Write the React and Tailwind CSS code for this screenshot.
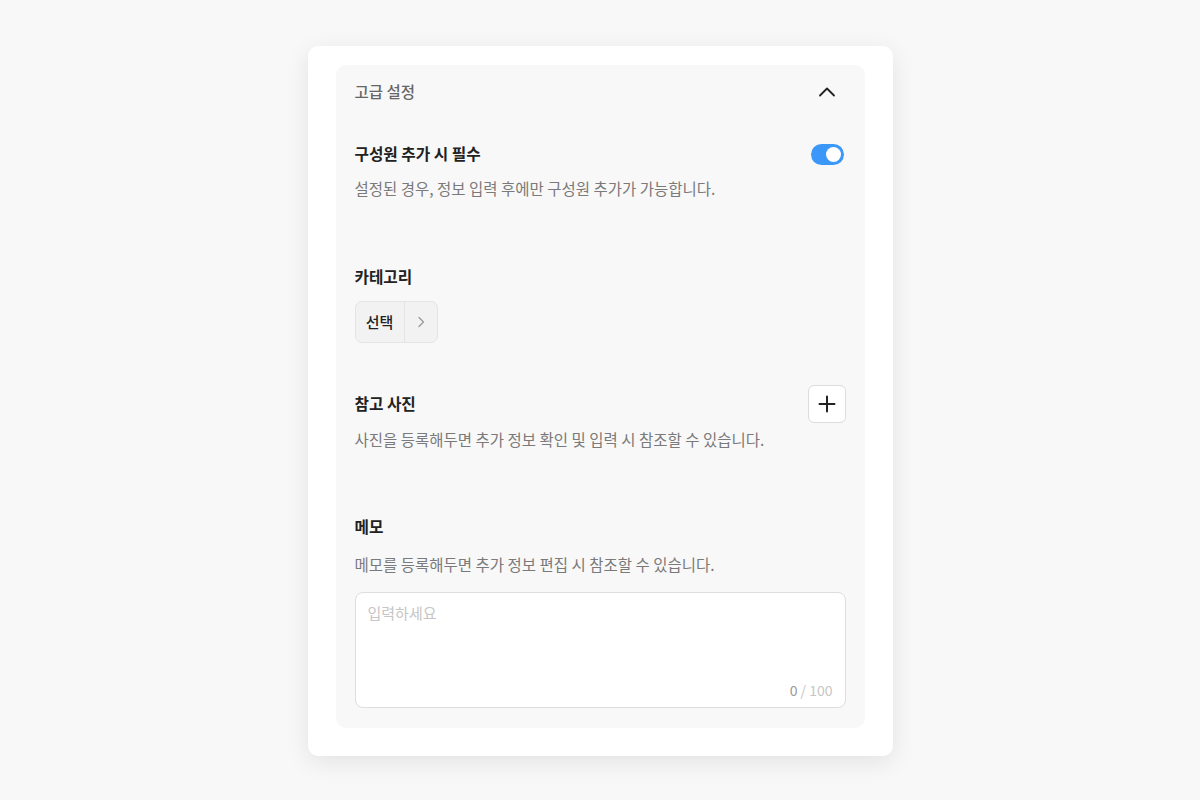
import React, { useState } from "react";

const FONT = { fontFamily: '"Noto Sans CJK KR", "Noto Sans", sans-serif' };

const ChevronUp = () => (
  <svg width="18" height="18" viewBox="0 0 18 18" fill="none">
    <path d="M2 12.5L9 5.5L16 12.5" stroke="#222" strokeWidth="1.8" strokeLinecap="round" strokeLinejoin="round" />
  </svg>
);

const ChevronRight = () => (
  <svg width="12" height="12" viewBox="0 0 12 12" fill="none">
    <path d="M4 1.5L8.5 6L4 10.5" stroke="#9a9a9a" strokeWidth="1.3" strokeLinecap="round" strokeLinejoin="round" />
  </svg>
);

const Plus = () => (
  <svg width="18" height="18" viewBox="0 0 18 18" fill="none">
    <path d="M9 1.5V16.5M1.5 9H16.5" stroke="#222" strokeWidth="2" strokeLinecap="round" />
  </svg>
);

const App = () => {
  const [required, setRequired] = useState(true);
  const [memo, setMemo] = useState("");

  return (
    <div className="min-h-screen bg-[#f8f8f8] flex items-center justify-center pt-[2px]" style={FONT}>
      <div className="w-[585px] bg-white rounded-[10px] shadow-[0_6px_24px_rgba(0,0,0,0.09)] pt-[19px] px-[28px] pb-[28px]">
        <div className="bg-[#f8f8f8] rounded-[10px] px-[19px] pb-5">
          {/* Header */}
          <div className="h-[54px] flex items-center justify-between">
            <span className="text-[15.5px] text-[#666] font-medium">고급 설정</span>
            <button className="mr-[10px]">
              <ChevronUp />
            </button>
          </div>

          {/* Required on add */}
          <div className="mt-6 h-[22px] flex items-center justify-between">
            <span className="text-[15.7px] font-bold text-[#222] leading-[22px]">구성원 추가 시 필수</span>
            <button
              onClick={() => setRequired(!required)}
              className={`mr-[2px] w-[33px] h-[21px] rounded-full flex items-center px-[3px] ${required ? "bg-[#3b97f8] justify-end" : "bg-[#d6d6d6] justify-start"}`}
            >
              <span className="w-[15px] h-[15px] rounded-full bg-white" />
            </button>
          </div>
          <p className="mt-3 text-[15.5px] leading-[22px] text-[#7a7a7a]">
            설정된 경우, 정보 입력 후에만 구성원 추가가 가능합니다.
          </p>

          {/* Category */}
          <p className="mt-[67px] text-[15.7px] font-bold text-[#222] leading-[22px]">카테고리</p>
          <div className="mt-[13px] inline-flex h-[42px] rounded-[7px] border border-[#e4e4e4] bg-[#f2f2f2] overflow-hidden">
            <span className="w-[48px] flex items-center justify-center text-[15px] font-medium text-[#222]">선택</span>
            <span className="w-[33px] flex items-center justify-center border-l border-[#e4e4e4]">
              <ChevronRight />
            </span>
          </div>

          {/* Reference photo */}
          <div className="mt-[42px] h-[38px] flex items-center justify-between">
            <span className="text-[15.7px] font-bold text-[#222] leading-[22px]">참고 사진</span>
            <button className="w-[38px] h-[38px] rounded-[6px] bg-white border border-[#dcdcdc] flex items-center justify-center">
              <Plus />
            </button>
          </div>
          <p className="mt-[5px] text-[15.5px] leading-[22px] text-[#7a7a7a]">
            사진을 등록해두면 추가 정보 확인 및 입력 시 참조할 수 있습니다.
          </p>

          {/* Memo */}
          <p className="mt-[66px] text-[15.7px] font-bold text-[#222] leading-[22px]">메모</p>
          <p className="mt-[15px] text-[15.5px] leading-[22px] text-[#7a7a7a]">
            메모를 등록해두면 추가 정보 편집 시 참조할 수 있습니다.
          </p>
          <div className="mt-[17px] h-[116px] rounded-[8px] border border-[#dedede] bg-white flex flex-col px-3 pt-[9px] pb-[8px]">
            <textarea
              value={memo}
              maxLength={100}
              onChange={(e) => setMemo(e.target.value)}
              placeholder="입력하세요"
              className="flex-1 resize-none outline-none bg-transparent text-[15px] leading-[22px] text-[#222] placeholder:text-[#c6c6c6]"
              style={FONT}
            />
            <div className="text-right text-[14px] leading-[18px]">
              <span className="text-[#999]">{memo.length}</span>
              <span className="text-[#c6c6c6]"> / 100</span>
            </div>
          </div>
        </div>
      </div>
    </div>
  );
};

export default App;
